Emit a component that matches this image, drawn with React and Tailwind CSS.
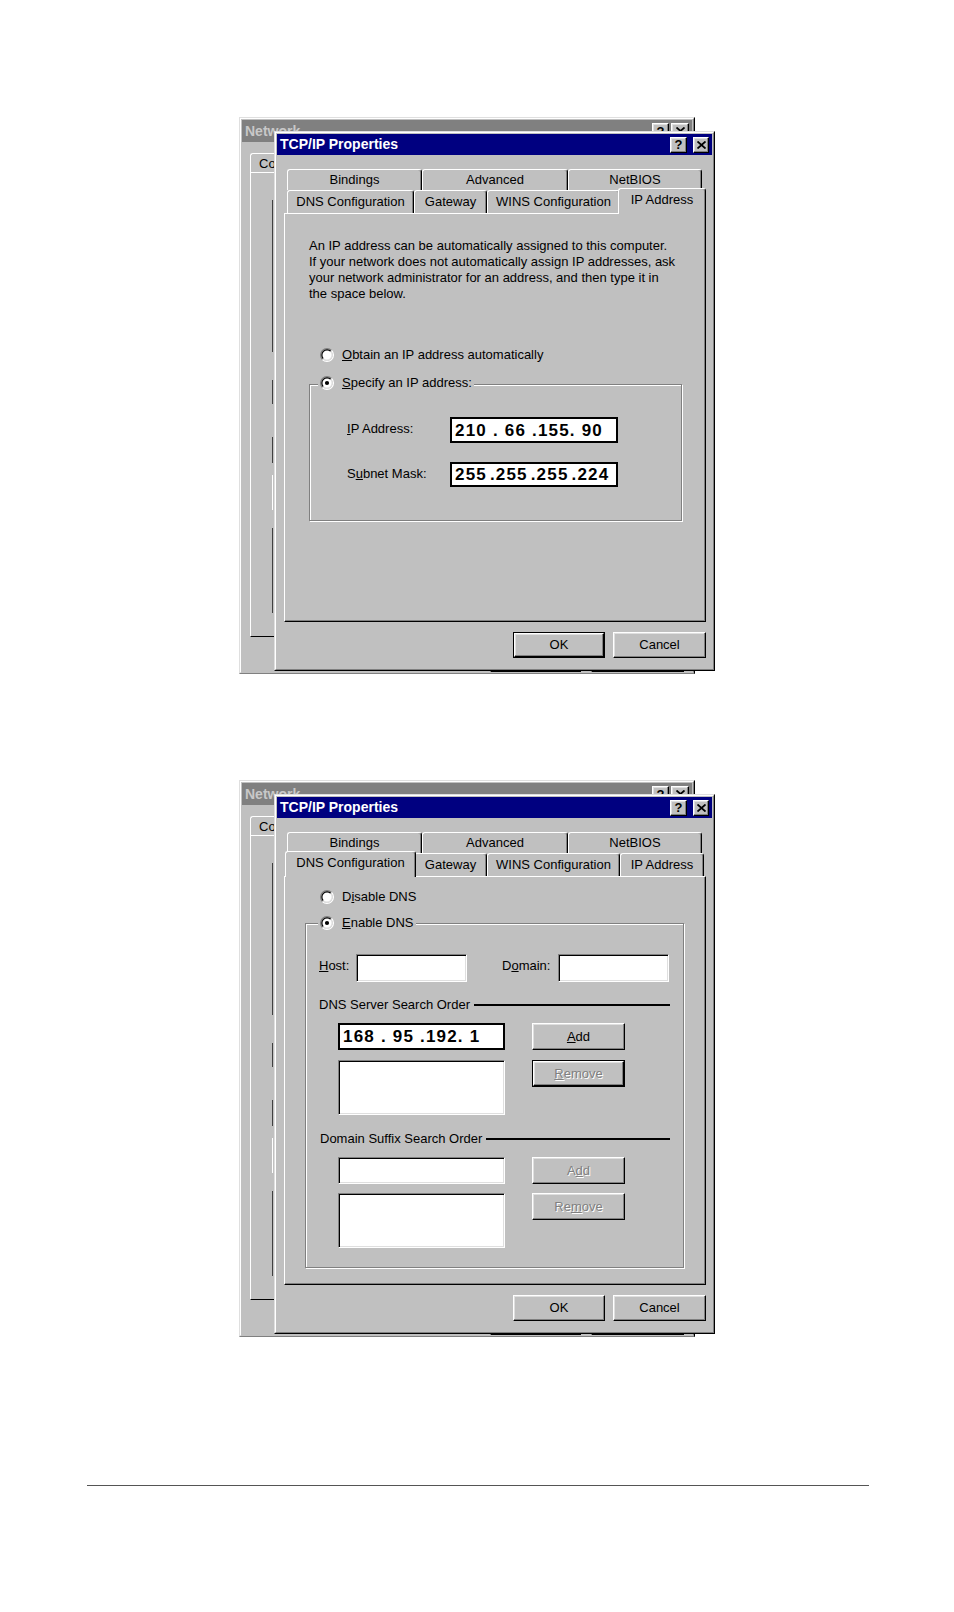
import React from "react";

const RAISED =
  "border border-t-white border-l-white border-r-black border-b-black shadow-[inset_-1px_-1px_0_#808080,inset_1px_1px_0_#dfdfdf]";
const SUNKEN =
  "bg-white border border-t-[#808080] border-l-[#808080] border-r-white border-b-white shadow-[inset_1px_1px_0_#000,inset_-1px_-1px_0_#dfdfdf]";
const DIS = "text-[#808080] [text-shadow:1px_1px_0_#fff]";
const GROUP =
  "border border-[#808080] shadow-[inset_1px_1px_0_#fff,1px_1px_0_#fff]";
const TAB =
  "flex items-center justify-center bg-[#c0c0c0] text-[13px] border-t border-l border-r border-t-white border-l-white border-r-black rounded-t-[3px] shadow-[inset_-1px_0_0_#808080]";
const TABSEL = "relative z-10 -mx-[2px] -mt-[2px] h-[26px] pb-[4px]";

function Radio({ checked }) {
  return (
    <svg width="14" height="14" viewBox="0 0 12 12" className="shrink-0">
      <circle cx="6" cy="6" r="4.5" fill="#fff" />
      <path d="M2.11 9.89A5.5 5.5 0 0 1 9.89 2.11" fill="none" stroke="#808080" />
      <path d="M9.89 2.11A5.5 5.5 0 0 1 2.11 9.89" fill="none" stroke="#fff" />
      <path d="M2.82 9.18A4.5 4.5 0 0 1 9.18 2.82" fill="none" stroke="#000" />
      <path d="M9.18 2.82A4.5 4.5 0 0 1 2.82 9.18" fill="none" stroke="#dfdfdf" />
      {checked && <circle cx="6" cy="6" r="1.8" fill="#000" />}
    </svg>
  );
}

function Btn({ children, size, def, disabled }) {
  const txt = disabled ? DIS : "text-black";
  if (def)
    return (
      <div className={`${size} shrink-0 border border-black`}>
        <div
          className={`h-full w-full bg-[#c0c0c0] flex items-center justify-center text-[13px] ${RAISED} ${txt}`}
        >
          {children}
        </div>
      </div>
    );
  return (
    <div
      className={`${size} shrink-0 bg-[#c0c0c0] flex items-center justify-center text-[13px] ${RAISED} ${txt}`}
    >
      {children}
    </div>
  );
}

function IpField({ value, size, tight }) {
  return (
    <div
      className={`${size} shrink-0 bg-white border-2 border-black flex items-center pl-[3px] overflow-hidden`}
    >
      <span
        className={`font-['Liberation_Sans',Arial,sans-serif] font-bold text-[17px] tracking-[1.2px] whitespace-pre leading-none ${
          tight ? "[word-spacing:-3px]" : ""
        }`}
      >
        {value}
      </span>
    </div>
  );
}

function TitleBtn({ children, size }) {
  return (
    <div
      className={`${size} shrink-0 bg-[#c0c0c0] flex items-center justify-center ${RAISED}`}
    >
      {children}
    </div>
  );
}

function CloseGlyph() {
  return (
    <svg width="9" height="8" viewBox="0 0 9 8">
      <path d="M0.5 0.5L8.5 7.5M8.5 0.5L0.5 7.5" stroke="#000" strokeWidth="1.8" />
    </svg>
  );
}

function NetworkWindow() {
  return (
    <div className="absolute left-0 top-0 w-[456px] h-[557px] bg-[#c0c0c0] border border-t-[#dfdfdf] border-l-[#dfdfdf] border-r-black border-b-[#808080]">
      <div className="h-full border border-t-white border-l-white border-r-[#808080] border-b-transparent p-px flex flex-col">
        <div className="h-[22px] shrink-0 bg-[#808080] flex items-center pl-[3px] pr-[3px]">
          <span className="text-[#c8c8c8] font-bold text-[14px]">Network</span>
          <div className="ml-auto flex gap-[2px]">
            <TitleBtn size="w-[17px] h-[16px]">
              <span className="font-bold text-[13px] leading-none">?</span>
            </TitleBtn>
            <TitleBtn size="w-[18px] h-[16px]">
              <CloseGlyph />
            </TitleBtn>
          </div>
        </div>
        <div className="mt-[11px] ml-[8px] w-[96px] h-[19px] shrink-0 border-t border-l border-r border-t-white border-l-white border-r-black rounded-t-[3px] pl-[8px] pt-[2px] flex items-center text-[13px]">
          Configuration
        </div>
        <div className="ml-[8px] w-[440px] h-[465px] shrink-0 border-l border-t border-b border-l-white border-t-white border-b-black flex flex-col pl-[21px]">
          <div className="mt-[27px] w-px h-[152px] bg-[#404040]" />
          <div className="mt-[28px] w-px h-[24px] bg-[#404040]" />
          <div className="mt-[33px] w-px h-[26px] bg-[#404040]" />
          <div className="mt-[12px] w-px h-[35px] bg-white" />
          <div className="mt-[18px] w-px h-[85px] bg-[#404040]" />
        </div>
        <div className="mt-[9px] flex justify-end gap-[10px] pr-[8px]">
          <Btn size="w-[91px] h-[26px]">OK</Btn>
          <Btn size="w-[93px] h-[26px]">Cancel</Btn>
        </div>
      </div>
    </div>
  );
}

function Tabs({ sel }) {
  return (
    <>
      <div className="flex h-[21px] pl-[3px]">
        <div className={`${TAB} h-full w-[135px]`}>Bindings</div>
        <div className={`${TAB} h-full w-[146px]`}>Advanced</div>
        <div className={`${TAB} h-full w-[134px]`}>NetBIOS</div>
      </div>
      <div className="flex h-[23px] pl-[3px]">
        {sel === "dns" ? (
          <div className={`${TAB} ${TABSEL} w-[131px]`}>DNS Configuration</div>
        ) : (
          <div className={`${TAB} h-full w-[127px]`}>DNS Configuration</div>
        )}
        <div className={`${TAB} h-full w-[73px]`}>Gateway</div>
        <div className={`${TAB} h-full w-[133px]`}>WINS Configuration</div>
        {sel === "ip" ? (
          <div className={`${TAB} ${TABSEL} w-[88px]`}>IP Address</div>
        ) : (
          <div className={`${TAB} h-full w-[84px]`}>IP Address</div>
        )}
      </div>
    </>
  );
}

function TcpDialog({ sel, okDefault, children }) {
  return (
    <div className="absolute left-[35px] top-[14px] w-[441px] h-[540px] bg-[#c0c0c0] border border-t-[#dfdfdf] border-l-[#dfdfdf] border-r-black border-b-black">
      <div className="h-full border border-t-white border-l-white border-r-[#808080] border-b-[#808080] p-px flex flex-col">
        <div className="h-[21px] shrink-0 bg-[#000080] flex items-center pl-[3px] pr-[3px]">
          <span className="text-white font-bold text-[14px]">TCP/IP Properties</span>
          <div className="ml-auto flex gap-[6px]">
            <TitleBtn size="w-[17px] h-[16px]">
              <span className="font-bold text-[13px] leading-none">?</span>
            </TitleBtn>
            <TitleBtn size="w-[16px] h-[16px]">
              <CloseGlyph />
            </TitleBtn>
          </div>
        </div>
        <div className="pl-[7px] pr-[6px] pt-[14px]">
          <Tabs sel={sel} />
          <div className="h-[409px] bg-[#c0c0c0] border border-t-white border-l-white border-r-black border-b-black shadow-[inset_-1px_-1px_0_#808080]">
            {children}
          </div>
          <div className="mt-[10px] flex justify-end gap-[8px]">
            <Btn size="w-[92px] h-[26px]" def={okDefault}>
              OK
            </Btn>
            <Btn size="w-[93px] h-[26px]">Cancel</Btn>
          </div>
        </div>
      </div>
    </div>
  );
}

function IpPanel() {
  return (
    <div className="pl-[24px] pt-[24px] text-[13px]">
      <p className="leading-[16px]">
        An IP address can be automatically assigned to this computer.
        <br />
        If your network does not automatically assign IP addresses, ask
        <br />
        your network administrator for an address, and then type it in
        <br />
        the space below.
      </p>
      <div className="mt-[45px] ml-[11px] h-[16px] flex items-center gap-[8px]">
        <Radio />
        <span>
          <u>O</u>btain an IP address automatically
        </span>
      </div>
      <div className={`mt-[21px] w-[373px] h-[137px] ${GROUP}`}>
        <div className="-mt-[10px] ml-[8px] h-[16px] w-fit pl-[2px] pr-[2px] bg-[#c0c0c0] flex items-center gap-[8px]">
          <Radio checked />
          <span>
            <u>S</u>pecify an IP address:
          </span>
        </div>
        <div className="mt-[26px] ml-[37px] flex items-center">
          <span className="w-[103px] pb-[2px]">
            <u>I</u>P Address:
          </span>
          <IpField value="210 . 66 .155. 90" size="w-[168px] h-[26px]" />
        </div>
        <div className="mt-[19px] ml-[37px] flex items-center">
          <span className="w-[103px] pb-[2px]">
            S<u>u</u>bnet Mask:
          </span>
          <IpField value="255 .255 .255 .224" size="w-[168px] h-[25px]" tight />
        </div>
      </div>
    </div>
  );
}

function DnsPanel() {
  return (
    <div className="pt-[12px] text-[13px]">
      <div className="ml-[35px] h-[16px] flex items-center gap-[8px]">
        <Radio />
        <span>
          D<u>i</u>sable DNS
        </span>
      </div>
      <div className={`mt-[18px] ml-[20px] w-[379px] h-[345px] ${GROUP}`}>
        <div className="-mt-[9px] ml-[12px] h-[16px] w-fit pl-[2px] pr-[2px] bg-[#c0c0c0] flex items-center gap-[8px]">
          <Radio checked />
          <span>
            <u>E</u>nable DNS
          </span>
        </div>
        <div className="mt-[23px] ml-[13px] flex items-center">
          <span className="w-[37px] pb-[4px]">
            <u>H</u>ost:
          </span>
          <div className={`w-[111px] h-[28px] shrink-0 ${SUNKEN}`} />
          <span className="ml-[35px] w-[56px] pb-[4px]">
            D<u>o</u>main:
          </span>
          <div className={`w-[111px] h-[28px] shrink-0 ${SUNKEN}`} />
        </div>
        <div className="mt-[15px] ml-[13px] mr-[13px] h-[16px] flex items-center">
          <span>DNS Server Search Order</span>
          <div className="ml-[4px] flex-1 h-[2px] bg-black" />
        </div>
        <div className="mt-[10px] ml-[32px] flex items-start gap-[27px]">
          <IpField value="168 . 95 .192. 1" size="w-[167px] h-[27px]" />
          <Btn size="w-[93px] h-[27px]">
            <span>
              <u>A</u>dd
            </span>
          </Btn>
        </div>
        <div className="mt-[10px] ml-[32px] flex items-start gap-[27px]">
          <div className={`w-[167px] h-[55px] shrink-0 ${SUNKEN}`} />
          <Btn size="w-[93px] h-[27px]" def disabled>
            <span>
              <u>R</u>emove
            </span>
          </Btn>
        </div>
        <div className="mt-[16px] ml-[14px] mr-[13px] h-[16px] flex items-center">
          <span>Domain Suffix Search Order</span>
          <div className="ml-[4px] flex-1 h-[2px] bg-black" />
        </div>
        <div className="mt-[10px] ml-[32px] flex items-start gap-[27px]">
          <div className={`w-[167px] h-[27px] shrink-0 ${SUNKEN}`} />
          <Btn size="w-[93px] h-[27px]" disabled>
            <span>
              A<u>d</u>d
            </span>
          </Btn>
        </div>
        <div className="mt-[9px] ml-[32px] flex items-start gap-[27px]">
          <div className={`w-[167px] h-[55px] shrink-0 ${SUNKEN}`} />
          <Btn size="w-[93px] h-[27px]" disabled>
            <span>
              Re<u>m</u>ove
            </span>
          </Btn>
        </div>
      </div>
    </div>
  );
}

export default function App() {
  return (
    <div className="w-[954px] h-[1612px] bg-white overflow-hidden text-black font-['Liberation_Sans',Arial,sans-serif]">
      <div className="pt-[117px]">
        <div className="relative ml-[239px] w-[477px] h-[557px]">
          <NetworkWindow />
          <TcpDialog sel="ip" okDefault>
            <IpPanel />
          </TcpDialog>
        </div>
        <div className="relative ml-[239px] mt-[106px] w-[477px] h-[557px]">
          <NetworkWindow />
          <TcpDialog sel="dns">
            <DnsPanel />
          </TcpDialog>
        </div>
      </div>
      <div className="ml-[87px] mt-[148px] w-[782px] h-px bg-[#555]" />
    </div>
  );
}
